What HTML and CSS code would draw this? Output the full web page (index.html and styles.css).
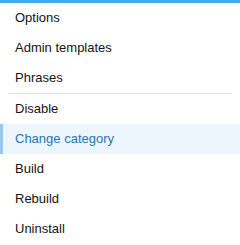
FILE: index.html
```html
<!DOCTYPE html>
<html lang="en">
<head>
  <meta charset="UTF-8">
  <title>Add-on menu</title>
  <link rel="stylesheet" href="styles.css">
</head>
<body>
  <!-- Menu des actions d'un add-on -->
  <div class="menu">
    <a class="menu-item" href="#">Options</a>
    <a class="menu-item" href="#">Admin templates</a>
    <a class="menu-item" href="#">Phrases</a>
    <hr class="menu-sep">
    <a class="menu-item" href="#">Disable</a>
    <a class="menu-item is-active" href="#">Change category</a>
    <a class="menu-item" href="#">Build</a>
    <a class="menu-item" href="#">Rebuild</a>
    <a class="menu-item" href="#">Uninstall</a>
  </div>
</body>
</html>
```

FILE: styles.css
```css
/* Style général */
body {
  margin: 0;
  padding: 0;
  background: #fff;
  font-family: "Liberation Sans", Arial, sans-serif;
  font-size: 13px;
}

/* Menu */
.menu {
  display: flex;
  flex-direction: column;
  width: 240px;
  height: 245px;
  box-sizing: border-box;
  border-top: 3px solid #47a7eb;
  border-radius: 0 0 4px 4px;
  background: #fff;
  overflow: hidden;
}

.menu-item {
  display: block;
  height: 30px;
  line-height: 30px;
  padding: 0 15px;
  border-left: 3px solid transparent;
  margin-left: -3px;
  padding-left: 15px;
  color: #141414;
  text-decoration: none;
}
.menu-item.is-active {
  margin-left: 0;
  padding-left: 12px;
  background: #edf6fd;
  border-left-color: #94c9f1;
  color: #2577b1;
}

.menu-sep {
  margin: 0 8px;
  border: none;
  border-top: 1px solid #dfdfdf;
  height: 0;
}
```
